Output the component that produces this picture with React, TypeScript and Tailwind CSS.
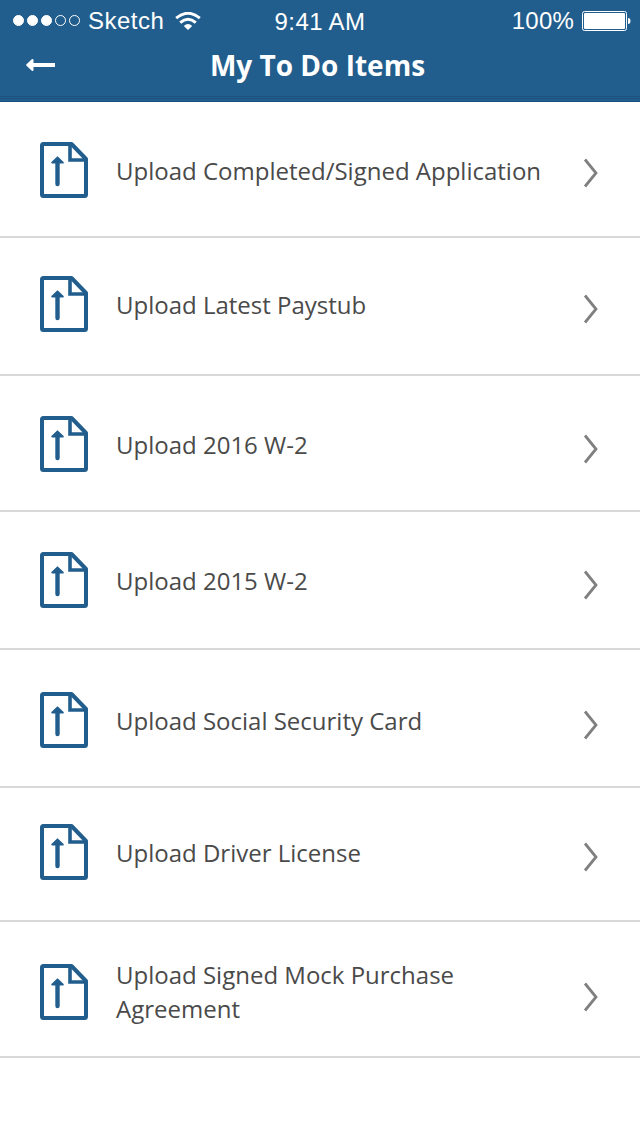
import React from 'react';
import clsx from 'clsx';

interface TodoItem {
  title: string;
  // row height and top inset
  row: string;
  label?: string;
  chevron?: string;
}

const items: TodoItem[] = [
  { title: 'Upload Completed/Signed Application', row: 'h-[136px] pt-10', chevron: 'mt-4' },
  { title: 'Upload Latest Paystub', row: 'h-[138px] pt-[38px]' },
  { title: 'Upload 2016 W-2', row: 'h-[136px] pt-10' },
  { title: 'Upload 2015 W-2', row: 'h-[138px] pt-10' },
  { title: 'Upload Social Security Card', row: 'h-[138px] pt-[42px]' },
  { title: 'Upload Driver License', row: 'h-[134px] pt-9' },
  {
    title: 'Upload Signed Mock Purchase Agreement',
    row: 'h-[136px] pt-[42px]',
    label: '-mt-1.5',
  },
];

function UploadIcon() {
  return (
    <svg className="w-12 h-14 shrink-0" viewBox="0 0 48 56" fill="none">
      <path
        d="M3.5 2H31.5L46 17V52.5Q46 54 44.5 54H3.5Q2 54 2 52.5V3.5Q2 2 3.5 2Z"
        stroke="#225e8d"
        strokeWidth="4"
        strokeLinejoin="round"
      />
      <path d="M30 2V18H46" stroke="#225e8d" strokeWidth="3.6" />
      <path d="M17.5 42V18" stroke="#225e8d" strokeWidth="4.4" strokeLinecap="round" />
      <path
        d="M17.5 15.2L23 20.6H12Z"
        fill="#225e8d"
        stroke="#225e8d"
        strokeWidth="1.6"
        strokeLinejoin="round"
      />
    </svg>
  );
}

function Chevron({ className }: { className?: string }) {
  return (
    <svg className={clsx('w-4 h-[30px] shrink-0', className)} viewBox="0 0 16 30" fill="none">
      <path d="M2 1.5L13 15L2 28.5" stroke="#808080" strokeWidth="2.8" />
    </svg>
  );
}

function WifiIcon() {
  return (
    <svg className="w-[26px] h-[18px]" viewBox="0 0 26 18" fill="none">
      <path d="M1.2 6.2Q13 -3.6 24.8 6.2" stroke="white" strokeWidth="3" />
      <path d="M5.2 10.6Q13 4 20.8 10.6" stroke="white" strokeWidth="3" />
      <path d="M8.8 13.9Q13 10 17.2 13.9L13 18Z" fill="white" />
    </svg>
  );
}

function StatusBar() {
  return (
    <div className="grid grid-cols-3 h-10 pl-[13px] pr-[9px] font-['Liberation_Sans',sans-serif] text-2xl leading-10 text-white">
      <div className="flex items-center">
        <div className="-mt-px flex gap-[3px]">
          {[0, 1, 2, 3, 4].map((dot) => (
            <span
              key={dot}
              className={clsx(
                'w-[11px] h-[11px] rounded-full border border-white',
                dot < 3 && 'bg-white'
              )}
            />
          ))}
        </div>
        <span className="ml-2 tracking-[0.5px]">Sketch</span>
        <span className="-mt-px ml-[11px]">
          <WifiIcon />
        </span>
      </div>
      <div className="pt-0.5 pr-1 text-center tracking-[0.4px]">9:41 AM</div>
      <div className="flex items-center justify-end">
        <span className="tracking-[0.2px]">100%</span>
        <svg className="w-[49px] h-5 ml-2" viewBox="0 0 49 20" fill="none">
          <rect x="0.5" y="0.5" width="44" height="19" rx="2" stroke="white" />
          <rect x="2" y="2" width="41" height="16" rx="1" fill="white" />
          <path d="M46 7Q48.5 7 48.5 10Q48.5 13 46 13Z" fill="white" />
        </svg>
      </div>
    </div>
  );
}

export default function App() {
  return (
    <div className="w-[640px] h-[1136px] overflow-hidden bg-white font-['Open_Sans',sans-serif]">
      {/* Header */}
      <header className="h-[102px] bg-[#225e8d]">
        <StatusBar />
        <div className="flex h-[50px] items-center px-[26px]">
          <svg className="w-[30px] h-3.5" viewBox="0 0 30 14" fill="none">
            <path d="M4 7H29" stroke="white" strokeWidth="4" />
            <path
              d="M1.2 7L6.5 2V12Z"
              fill="white"
              stroke="white"
              strokeWidth="2"
              strokeLinejoin="round"
            />
          </svg>
          <h1 className="flex-1 pr-[35px] text-center text-[28px] font-bold leading-[50px] text-white">
            My To Do Items
          </h1>
        </div>
        <div className="mt-1.5 h-1.5 border-y border-[#1d5280]">
          <div className="mt-px h-px bg-[#1d5280]" />
        </div>
      </header>

      {/* Items */}
      <ul>
        {items.map((item) => (
          <li
            key={item.title}
            className={clsx('flex items-start border-b-2 border-[#d8d8d8] pl-10 pr-[41px]', item.row)}
          >
            <UploadIcon />
            <span
              className={clsx(
                'ml-7 w-[440px] text-2xl leading-[34px] text-[#4a4a4a]',
                item.label ?? 'mt-3'
              )}
            >
              {item.title}
            </span>
            <Chevron className={clsx('ml-auto', item.chevron ?? 'mt-[18px]')} />
          </li>
        ))}
      </ul>
    </div>
  );
}
